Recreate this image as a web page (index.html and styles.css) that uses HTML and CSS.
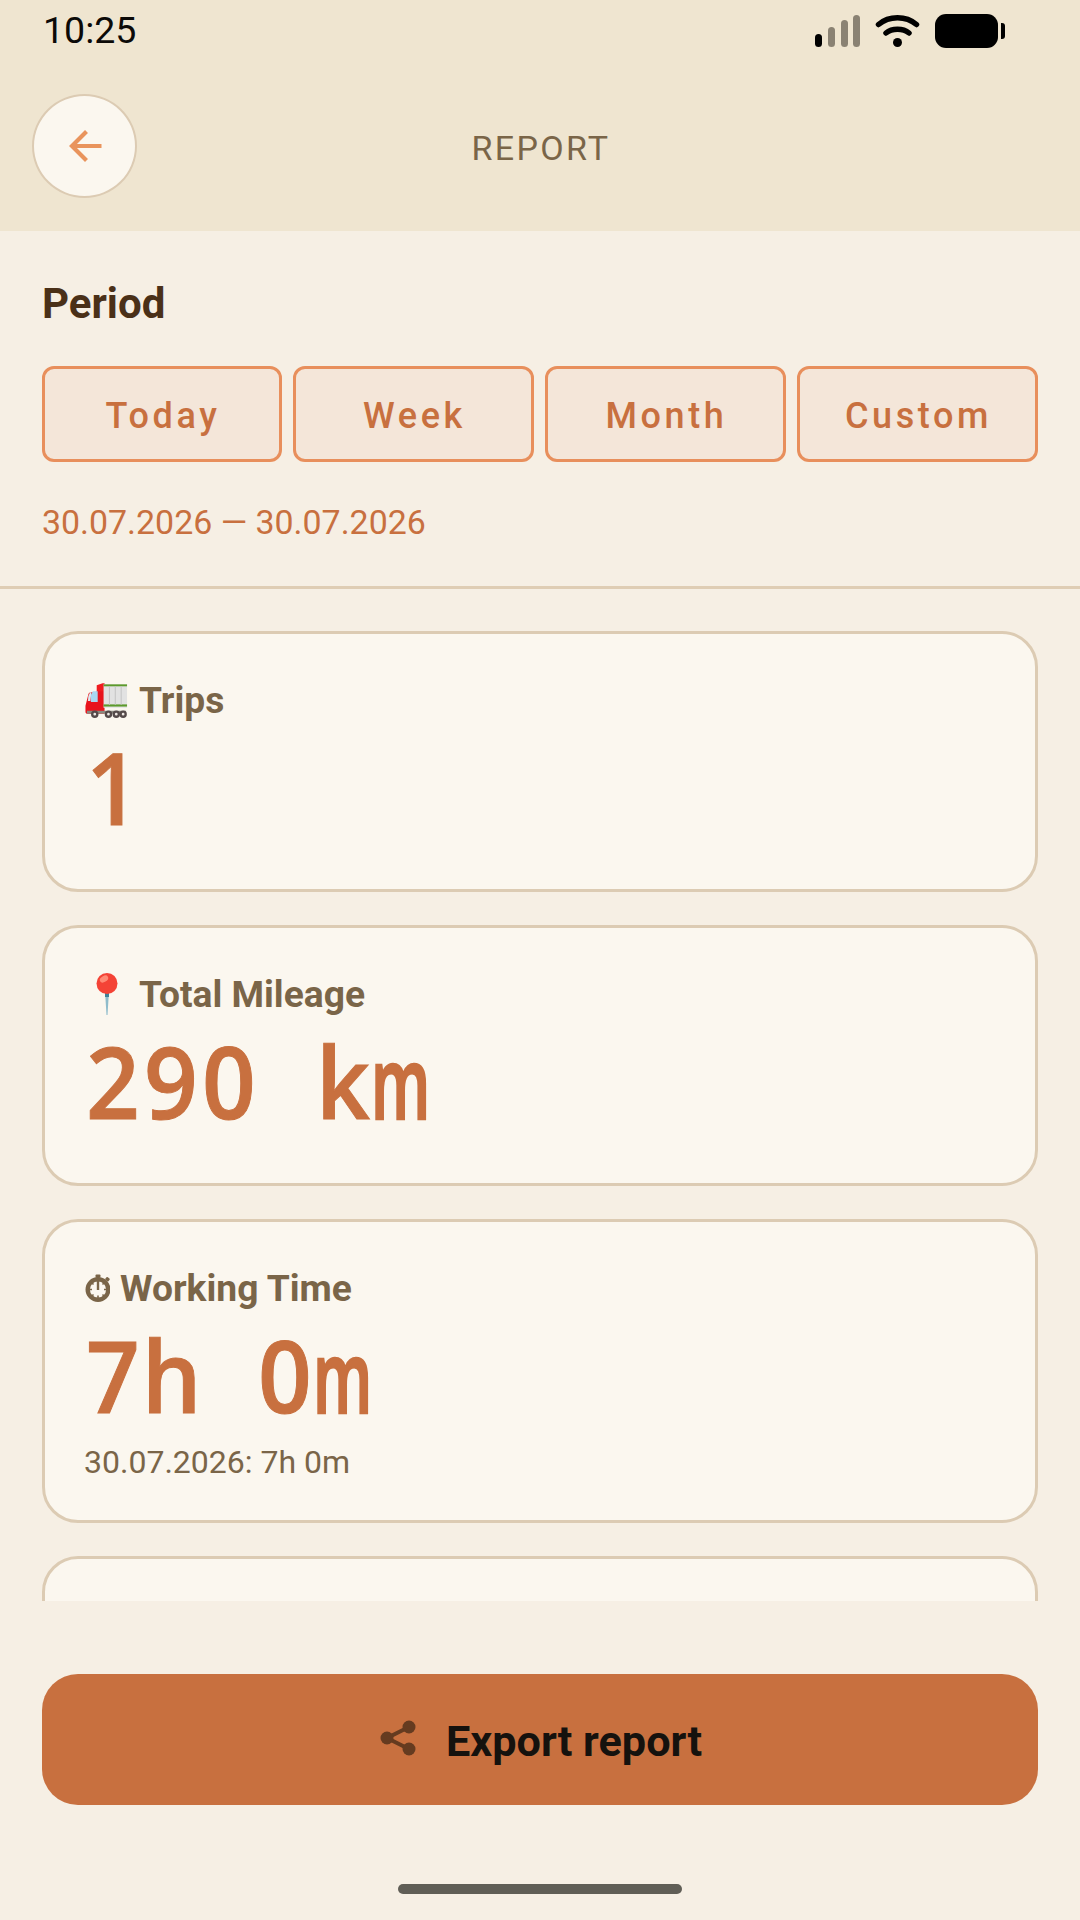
FILE: index.html
```html
<!DOCTYPE html>
<html lang="en">
<head>
<meta charset="utf-8">
<title>Report</title>
<link rel="stylesheet" href="styles.css">
</head>
<body>
<div class="app">
  <header class="top">
    <div class="status">
      <span class="time">10:25</span>
      <svg class="status-icons" width="190" height="36" viewBox="815 13 190 36">
        <rect x="815" y="34" width="7" height="13" rx="3.5" fill="#000"/>
        <rect x="828" y="27" width="7" height="20" rx="3.5" fill="#8a8273"/>
        <rect x="841" y="20" width="7" height="27" rx="3.5" fill="#8a8273"/>
        <rect x="853" y="15" width="7" height="32" rx="3.5" fill="#8a8273"/>
        <path d="M878.5 24.5C889 15.5 906 15.5 916.5 24.5" fill="none" stroke="#000" stroke-width="5.5" stroke-linecap="round"/>
        <path d="M886 33C892 28 903 28 909 33" fill="none" stroke="#000" stroke-width="5.5" stroke-linecap="round"/>
        <circle cx="897.5" cy="42.5" r="4.5" fill="#000"/>
        <rect x="935" y="14" width="63" height="34" rx="11" fill="#000"/>
        <path d="M1001 23h1a3 3 0 0 1 3 3v10a3 3 0 0 1-3 3h-1z" fill="#000"/>
      </svg>
    </div>
    <div class="bar">
      <button class="back" type="button" aria-label="Back">
        <svg width="48" height="48" viewBox="0 0 48 48"><path d="M40.500 24H12M25.500 9.500L11 24l14.500 14.500" fill="none" stroke="#e9945c" stroke-width="4.200"/></svg>
      </button>
      <h1 class="title">REPORT</h1>
    </div>
  </header>

  <section class="period">
    <h2 class="period-title">Period</h2>
    <div class="chips">
      <button class="chip" type="button">Today</button>
      <button class="chip" type="button">Week</button>
      <button class="chip" type="button">Month</button>
      <button class="chip" type="button">Custom</button>
    </div>
    <p class="range">30.07.2026 — 30.07.2026</p>
  </section>

  <main class="list">
    <article class="card">
      <div class="label">
        <svg class="emoji" width="45" height="38" viewBox="-1 0 46 38">
          <path d="M14 9h6v24H2c-1 0-1.500-1-1.500-2v-6l3-12c.4-1.500 1.500-2 3-2h4z" fill="#e8141c"/>
          <path d="M12 4l6-2h2v8h-8z" fill="#f01c20"/>
          <path d="M8 10h5v11H6v-7z" fill="#a9d8f0"/>
          <path d="M3.500 15l1.800-4h1.200l-1 9H3z" fill="#dbeaf2"/>
          <rect x="19" y="3" width="24" height="24" fill="#e2e2e2"/>
          <rect x="19" y="3" width="24" height="2" fill="#5d9a2c"/>
          <rect x="19" y="23.500" width="24" height="2.200" fill="#5d9a2c"/>
          <path d="M25 5v19M31 5v19M37 5v19" stroke="#c4c4c4" stroke-width="1"/>
          <rect x="2" y="30" width="40" height="3" fill="#8a8a80"/>
          <g fill="#efe9e4" stroke="#544a4a" stroke-width="2.400">
            <circle cx="10" cy="33.500" r="2.600"/><circle cx="24" cy="33.500" r="2.600"/><circle cx="32" cy="33.500" r="2.600"/><circle cx="39" cy="33.500" r="2.600"/>
          </g>
        </svg>
        <span>Trips</span>
      </div>
      <div class="value"><span class="cell">1</span></div>
    </article>

    <article class="card">
      <div class="label">
        <svg class="emoji" width="45" height="42" viewBox="0 0 45 42">
          <path d="M21 18h4l-1.500 24h-1z" fill="#8fbccb"/>
          <rect x="21" y="19" width="4" height="5" fill="#3f8299"/>
          <circle cx="23" cy="10.500" r="10.500" fill="#f44336"/>
          <ellipse cx="20" cy="6" rx="4.500" ry="3" fill="#ff8a75" transform="rotate(-30 20 6)"/>
        </svg>
        <span>Total Mileage</span>
      </div>
      <div class="value"><span class="cell">2</span><span class="cell">9</span><span class="cell">0</span><span class="cell"> </span><span class="cell cell-left">k</span><span class="cell cell-m">m</span></div>
    </article>

    <article class="card">
      <div class="label">
        <svg class="emoji" width="26" height="28" viewBox="-1 0 26 28" fill="#7a6548">
          <rect x="10.500" y="0.500" width="5" height="3" rx="1"/>
          <rect x="11.500" y="2.500" width="3" height="3"/>
          <rect x="20.500" y="3.500" width="4" height="3.500" rx="1" transform="rotate(42 22.500 5.200)"/>
          <circle cx="13" cy="15.500" r="10.300" fill="none" stroke="#7a6548" stroke-width="4.400"/>
          <path d="M13 6.500v9.500" stroke="#7a6548" stroke-width="2.400"/>
          <path d="M13 21.500v2.500M7 15.500H4.500M21.500 15.500H19M8.500 20.500l-1.700 1.700M17.500 20.500l1.700 1.700M8.500 10.500L6.800 8.800M17.500 10.500l1.700-1.700" stroke="#7a6548" stroke-width="1.600"/>
        </svg>
        <span>Working Time</span>
      </div>
      <div class="value"><span class="cell">7</span><span class="cell cell-left">h</span><span class="cell"> </span><span class="cell cell-left">0</span><span class="cell cell-m">m</span></div>
      <p class="note">30.07.2026: 7h 0m</p>
    </article>

    <article class="card card-empty"></article>
  </main>

  <footer class="foot">
    <button class="export" type="button">
      <svg class="share" width="36" height="36" viewBox="0 0 36 36">
        <path d="M29 7L7 18l22 11" fill="none" stroke="#653b20" stroke-width="4"/>
        <circle cx="7" cy="18" r="6.500" fill="#653b20"/>
        <circle cx="29" cy="7" r="6.500" fill="#653b20"/>
        <circle cx="29" cy="29" r="6.500" fill="#653b20"/>
      </svg>
      <span>Export report</span>
    </button>
    <div class="home"></div>
  </footer>
</div>
</body>
</html>
```

FILE: styles.css
```css
* { box-sizing: border-box; }
html, body { margin: 0; padding: 0; }
body { width: 1080px; height: 1920px; overflow: hidden; font-family: Roboto, "Liberation Sans", sans-serif; background: #f6efe4; }
h1, h2, p { margin: 0; font-weight: inherit; }
button { font-family: inherit; cursor: pointer; }

.app { width: 1080px; height: 1920px; display: flex; flex-direction: column; }

.top { height: 231px; flex: none; background: #efe5d0; }
.status { height: 62px; padding: 12px 75px 0 43px; display: flex; justify-content: space-between; align-items: flex-start; }
.time { font-size: 37.500px; line-height: 36px; color: #0c0a08; }
.status-icons { display: block; margin-top: 1px; }

.bar { position: relative; height: 104px; margin-top: 32px; padding-left: 32px; display: flex; align-items: center; }
.back { width: 105px; height: 104px; padding: 0; flex: none; border-radius: 50%; border: 2.500px solid #dccbb3; background: #fbf7ef; display: flex; align-items: center; justify-content: center; }
.title { position: absolute; left: 0; right: 0; top: 4px; bottom: 0; padding-left: 2px; display: flex; align-items: center; justify-content: center; font-size: 34px; letter-spacing: 2.300px; color: #7a6548; font-weight: 400; pointer-events: none; }

.period { flex: none; height: 358px; padding: 49px 42px 0; border-bottom: 3px solid #dfcdb4; }
.period-title { font-size: 42px; line-height: 48px; font-weight: 700; color: #4a3018; }
.chips { margin-top: 38px; display: grid; grid-template-columns: 240px 241px 241px 241px; gap: 11px; }
.chip { height: 96px; padding: 4px 0 0 2px; border: 3px solid #e88f5c; border-radius: 12px; background: #f4e6d9; color: #c8703f; font-size: 36px; font-weight: 500; letter-spacing: 3.600px; }
.range { margin-top: 41px; font-size: 33.900px; line-height: 40px; color: #c8703f; }

.list { flex: 1; min-height: 0; overflow: hidden; padding: 42px 42px 0; display: flex; flex-direction: column; gap: 33px; }
.card { flex: none; padding: 44px 39px 35px; border: 3px solid #dccbb3; border-radius: 36px; background: #fbf7ef; }
.card-empty { min-height: 300px; }
.label { display: flex; align-items: center; gap: 10px; height: 44px; font-size: 37.200px; font-weight: 700; color: #7a6548; }
.emoji { flex: none; display: block; }
.value { margin-top: 0; padding-bottom: 4px; font-family: "Open Sans", "Noto Sans", sans-serif; font-size: 100px; line-height: 128px; font-weight: 600; color: #c8703f; -webkit-text-stroke: 1px #c8703f; }
.cell { display: inline-block; width: 58px; text-align: center; white-space: pre; transform: scaleX(.94); }
.cell-left { transform: translateX(-2px) scaleX(.94); }
.cell-m { transform-origin: left center; transform: translateX(-3px) scaleX(.62); -webkit-text-stroke: 2.500px #c8703f; }
.note { padding-bottom: 3px; font-size: 32px; line-height: 40px; color: #7a6548; }

.foot { flex: none; height: 319px; padding: 73px 42px 0; display: flex; flex-direction: column; align-items: center; }
.export { width: 100%; height: 131px; flex: none; padding: 3px 0 0 2px; border: 0; border-radius: 36px; background: #c8703f; color: #15120e; display: flex; align-items: center; justify-content: center; gap: 30px; font-size: 43.200px; font-weight: 700; }
.share { flex: none; display: block; margin-bottom: 6px; }
.home { margin-top: 79px; width: 284px; height: 10px; border-radius: 5px; background: #605e56; }
```
